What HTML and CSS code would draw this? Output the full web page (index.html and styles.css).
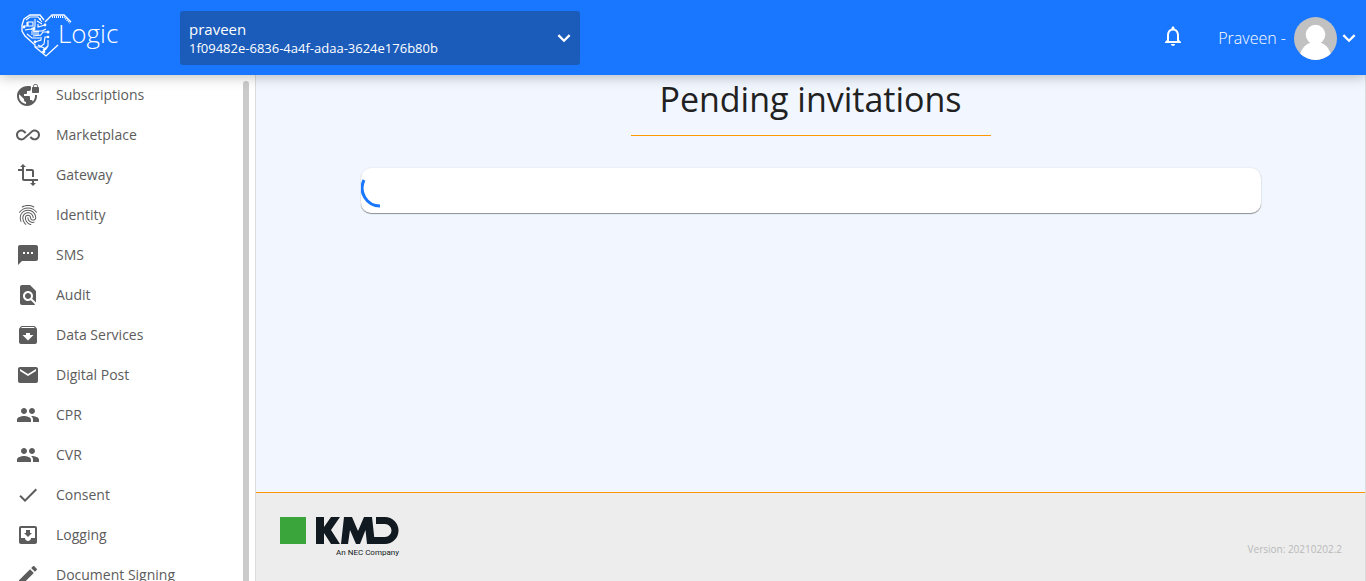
FILE: index.html
```html
<!DOCTYPE html>
<html lang="en">
<head>
<meta charset="utf-8">
<meta name="viewport" content="width=device-width, initial-scale=1">
<title>Logic - Pending invitations</title>
<link rel="stylesheet" href="styles.css">
</head>
<body>
<div class="app">
  <header class="topbar">
    <a class="brand" href="#" aria-label="Logic home">
      <svg class="brand-heart" viewBox="0 0 52 46" fill="none" stroke="currentColor" aria-hidden="true">
        <path stroke-width="1.3" d="M24 8l-4-5H10L4 7l-2 6v6l3 5 10 9v2l11 9 12-11M25 10l7-7h12l7 7"/>
        <path stroke-width="1.8" stroke-dasharray="1 1" d="M32 5h12l6 6"/>
        <path stroke-width="1.1" d="M6 8l4-3h8l4 5M4 14h3v-4M8 10h5v4H8zM10 5h6M15 7v8l-4 2M17 9l5 3M18 12v3l7-2M5 18l6-1 3 2h8l4-2M11 20h8M11 22h8M7 22l5 4h8M13 24l8-1M28 20h-5l-3 4M28 25h-3l-1 7-4 3h-5M15 30l6-2v-3M28 28v6l-5 4M18 33l6 3v5M22 40l4-3 2-3"/>
        <g fill="currentColor" stroke="none"><circle cx="28" cy="20" r="1.500"/><circle cx="28" cy="25" r="1.300"/><circle cx="25" cy="13" r="1.400"/><circle cx="4" cy="15" r="1.400"/><circle cx="14" cy="17" r="1.400"/><circle cx="15" cy="30" r="1.400"/><circle cx="24" cy="40" r="1.300"/><circle cx="20" cy="7" r="1.100"/></g>
      </svg>
      <span class="brand-name">Logic</span>
    </a>
    <button class="tenant" type="button" aria-haspopup="listbox">
      <span class="tenant-text">
        <span class="tenant-name">praveen</span>
        <span class="tenant-id">1f09482e-6836-4a4f-adaa-3624e176b80b</span>
      </span>
      <svg class="chevron" viewBox="0 0 12 8" aria-hidden="true"><path d="M1 1l5 5 5-5"/></svg>
    </button>
    <div class="account">
      <button class="bell" type="button" aria-label="Notifications">
        <svg class="icon" viewBox="0 0 24 24" aria-hidden="true"><path d="M12 22c1.1 0 2-.9 2-2h-4c0 1.1.9 2 2 2zm6-6v-5c0-3.07-1.63-5.64-4.5-6.32V4c0-.83-.67-1.5-1.5-1.5s-1.5.67-1.5 1.5v.68C7.64 5.36 6 7.92 6 11v5l-2 2v1h16v-1l-2-2zm-2 1H8v-6c0-2.48 1.51-4.5 4-4.5s4 2.02 4 4.5v6z"/></svg>
      </button>
      <button class="profile" type="button">
        <span class="profile-name">Praveen -</span>
        <svg class="avatar" viewBox="0 0 44 44" aria-hidden="true">
          <defs><clipPath id="round"><circle cx="22" cy="22" r="22"/></clipPath></defs>
          <g clip-path="url(#round)"><path fill="#c1c1c1" d="M0 0h44v44H0z"/><g fill="#fff"><circle cx="22" cy="18" r="10"/><path d="M5 44c1-10 6-16 12-18h10c6 2 11 8 12 18z"/></g></g>
        </svg>
        <svg class="chevron" viewBox="0 0 12 8" aria-hidden="true"><path d="M1 1l5 5 5-5"/></svg>
      </button>
    </div>
  </header>
  <div class="body">
    <nav class="sidebar" aria-label="Services">
      <ul class="menu">
        <li><a class="menu-link" href="#"><svg class="icon" viewBox="0 0 24 24"><path d="M22 4v-.5C22 2.12 20.88 1 19.5 1S17 2.12 17 3.5V4c-.55 0-1 .45-1 1v4c0 .55.45 1 1 1h5c.55 0 1-.45 1-1V5c0-.55-.45-1-1-1zm-.8 0h-3.4v-.5c0-.94.76-1.7 1.7-1.7s1.7.76 1.7 1.7V4zm-2.28 8c.04.33.08.66.08 1 0 2.08-.8 3.97-2.1 5.39-.26-.81-1-1.39-1.9-1.39h-1v-3c0-.55-.45-1-1-1H8v-2h2c.55 0 1-.45 1-1V8h2c1.1 0 2-.9 2-2V3.46c-.95-.3-1.95-.46-3-.46C5.48 3 1 7.48 1 13s4.48 10 10 10 10-4.48 10-10c0-.34-.02-.67-.05-1h-2.03zM10 20.93c-3.95-.49-7-3.85-7-7.93 0-.62.08-1.21.21-1.79L8 16v1c0 1.1.9 2 2 2v1.93z"/></svg>Subscriptions</a></li>
        <li><a class="menu-link" href="#"><svg class="icon" viewBox="0 0 24 24"><path d="M18.6 6.62c-1.44 0-2.8.56-3.77 1.53L12 10.66 10.48 12h.01L7.8 14.39c-.64.64-1.49.99-2.4.99-1.87 0-3.39-1.51-3.39-3.38S3.53 8.62 5.4 8.62c.91 0 1.76.35 2.44 1.03l1.13 1 1.51-1.34L9.22 8.2C8.2 7.18 6.84 6.62 5.4 6.62 2.42 6.62 0 9.04 0 12s2.42 5.38 5.4 5.38c1.44 0 2.8-.56 3.77-1.53l2.83-2.5.01.01L13.52 12h-.01l2.69-2.39c.64-.64 1.49-.99 2.4-.99 1.87 0 3.39 1.51 3.39 3.38s-1.52 3.38-3.39 3.38c-.9 0-1.76-.35-2.44-1.03l-1.14-1.01-1.51 1.34 1.27 1.12c1.02 1.01 2.37 1.57 3.82 1.57 2.98 0 5.4-2.41 5.4-5.38s-2.42-5.37-5.4-5.37z"/></svg>Marketplace</a></li>
        <li><a class="menu-link" href="#"><svg class="icon" viewBox="0 0 24 24"><path d="M22 18v-2H8V4h2L7 1 4 4h2v2H2v2h4v8c0 1.1.9 2 2 2h8v2h-2l3 3 3-3h-2v-2h4zM10 8h6v6h2V8c0-1.1-.9-2-2-2h-6v2z"/></svg>Gateway</a></li>
        <li><a class="menu-link" href="#"><svg class="icon" viewBox="0 0 24 24"><path d="M17.81 4.47c-.08 0-.16-.02-.23-.06C15.66 3.42 14 3 12.01 3c-1.98 0-3.86.47-5.57 1.41-.24.13-.54.04-.68-.2-.13-.24-.04-.55.2-.68C7.82 2.52 9.86 2 12.01 2c2.13 0 3.99.47 6.03 1.52.25.13.34.43.21.67-.09.18-.26.28-.44.28zM3.5 9.72c-.1 0-.2-.03-.29-.09-.23-.16-.28-.47-.12-.7.99-1.4 2.25-2.5 3.75-3.27C9.98 4.04 14 4.03 17.15 5.65c1.5.77 2.76 1.86 3.75 3.25.16.22.11.54-.12.7-.23.16-.54.11-.7-.12-.9-1.26-2.04-2.25-3.39-2.94-2.87-1.47-6.54-1.47-9.4.01-1.36.7-2.5 1.7-3.4 2.96-.08.14-.23.21-.39.21zm6.25 12.07c-.13 0-.26-.05-.35-.15-.87-.87-1.34-1.43-2.01-2.64-.69-1.23-1.05-2.73-1.05-4.34 0-2.97 2.54-5.39 5.66-5.39s5.66 2.42 5.66 5.39c0 .28-.22.5-.5.5s-.5-.22-.5-.5c0-2.42-2.09-4.39-4.66-4.39-2.57 0-4.66 1.97-4.66 4.39 0 1.44.32 2.77.93 3.85.64 1.15 1.08 1.64 1.85 2.42.19.2.19.51 0 .71-.11.1-.24.15-.37.15zm7.17-1.85c-1.19 0-2.24-.3-3.1-.89-1.49-1.01-2.38-2.65-2.38-4.39 0-.28.22-.5.5-.5s.5.22.5.5c0 1.41.72 2.74 1.94 3.56.71.48 1.54.71 2.54.71.24 0 .64-.03 1.04-.1.27-.05.53.13.58.41.05.27-.13.53-.41.58-.57.11-1.07.12-1.21.12zM14.91 22c-.04 0-.09-.01-.13-.02-1.59-.44-2.63-1.03-3.72-2.1-1.4-1.39-2.17-3.24-2.17-5.22 0-1.62 1.38-2.94 3.08-2.94 1.7 0 3.08 1.32 3.08 2.94 0 1.07.93 1.94 2.08 1.94s2.08-.87 2.08-1.94c0-3.77-3.25-6.83-7.25-6.83-2.84 0-5.44 1.58-6.61 4.03-.39.81-.59 1.76-.59 2.8 0 .78.07 2.01.67 3.61.1.26-.03.55-.29.64-.26.1-.55-.04-.64-.29-.49-1.31-.73-2.61-.73-3.96 0-1.2.23-2.29.68-3.24 1.33-2.79 4.28-4.6 7.51-4.6 4.55 0 8.25 3.51 8.25 7.83 0 1.62-1.38 2.94-3.08 2.94s-3.08-1.32-3.08-2.94c0-1.07-.93-1.94-2.08-1.94s-2.08.87-2.08 1.94c0 1.71.66 3.31 1.87 4.51.95.94 1.86 1.46 3.27 1.85.27.07.42.35.35.61-.05.23-.26.38-.47.38z"/></svg>Identity</a></li>
        <li><a class="menu-link" href="#"><svg class="icon" viewBox="0 0 24 24"><path d="M20 2H4c-1.100 0-1.990.9-1.990 2L2 22l4-4h14c1.100 0 2-.9 2-2V4c0-1.100-.9-2-2-2zM9 11H7V9h2v2zm4 0h-2V9h2v2zm4 0h-2V9h2v2z"/></svg>SMS</a></li>
        <li><a class="menu-link" href="#"><svg class="icon" viewBox="0 0 24 24"><path d="M20 19.590V8l-6-6H6c-1.100 0-1.990.9-1.990 2L4 20c0 1.100.89 2 1.990 2H18c.45 0 .85-.15 1.190-.4l-4.430-4.430c-.8.52-1.740.83-2.760.83-2.760 0-5-2.240-5-5s2.240-5 5-5 5 2.240 5 5c0 1.020-.31 1.960-.83 2.750L20 19.590zM9 13c0 1.660 1.340 3 3 3s3-1.340 3-3-1.340-3-3-3-3 1.340-3 3z"/></svg>Audit</a></li>
        <li><a class="menu-link" href="#"><svg class="icon" viewBox="0 0 24 24"><path d="M20.540 5.230l-1.390-1.680C18.880 3.210 18.470 3 18 3H6c-.47 0-.88.21-1.160.55L3.460 5.230C3.170 5.570 3 6.020 3 6.500V19c0 1.100.9 2 2 2h14c1.100 0 2-.9 2-2V6.500c0-.48-.17-.93-.46-1.270zM12 17.500L6.500 12H10v-2h4v2h3.500L12 17.500zM5.120 5l.81-1h12l.94 1H5.120z"/></svg>Data Services</a></li>
        <li><a class="menu-link" href="#"><svg class="icon" viewBox="0 0 24 24"><path d="M20 4H4c-1.100 0-1.990.9-1.990 2L2 18c0 1.100.9 2 2 2h16c1.100 0 2-.9 2-2V6c0-1.100-.9-2-2-2zm0 4l-8 5-8-5V6l8 5 8-5v2z"/></svg>Digital Post</a></li>
        <li><a class="menu-link" href="#"><svg class="icon" viewBox="0 0 24 24"><path d="M16 11c1.660 0 2.990-1.340 2.990-3S17.660 5 16 5s-3 1.340-3 3 1.340 3 3 3zm-8 0c1.660 0 2.990-1.340 2.990-3S9.660 5 8 5 5 6.340 5 8s1.340 3 3 3zm0 2c-2.330 0-7 1.170-7 3.500V19h14v-2.500c0-2.330-4.670-3.500-7-3.500zm8 0c-.29 0-.62.02-.97.05 1.160.84 1.970 1.970 1.970 3.450V19h6v-2.500c0-2.330-4.670-3.500-7-3.500z"/></svg>CPR</a></li>
        <li><a class="menu-link" href="#"><svg class="icon" viewBox="0 0 24 24"><path d="M16 11c1.660 0 2.990-1.340 2.990-3S17.660 5 16 5s-3 1.340-3 3 1.340 3 3 3zm-8 0c1.660 0 2.990-1.340 2.990-3S9.660 5 8 5 5 6.340 5 8s1.340 3 3 3zm0 2c-2.330 0-7 1.170-7 3.500V19h14v-2.500c0-2.330-4.670-3.500-7-3.500zm8 0c-.29 0-.62.02-.97.05 1.160.84 1.970 1.970 1.970 3.450V19h6v-2.500c0-2.330-4.670-3.500-7-3.500z"/></svg>CVR</a></li>
        <li><a class="menu-link" href="#"><svg class="icon" viewBox="0 0 24 24"><path d="M9 16.170L4.830 12l-1.420 1.410L9 19 21 7l-1.410-1.410z"/></svg>Consent</a></li>
        <li><a class="menu-link" href="#"><svg class="icon" viewBox="0 0 24 24"><path d="M19 3H4.990c-1.110 0-1.980.9-1.980 2L3 19c0 1.100.88 2 1.990 2H19c1.100 0 2-.9 2-2V5c0-1.100-.9-2-2-2zm0 12h-4c0 1.660-1.350 3-3 3s-3-1.340-3-3H4.990V5H19v10zm-3-5h-2V7h-4v3H8l4 4 4-4z"/></svg>Logging</a></li>
        <li><a class="menu-link" href="#"><svg class="icon" viewBox="0 0 24 24"><path d="M3 17.250V21h3.750L17.810 9.940l-3.750-3.750L3 17.250zM20.710 7.040c.39-.39.39-1.020 0-1.410l-2.340-2.340c-.39-.39-1.020-.39-1.410 0l-1.830 1.830 3.750 3.750 1.830-1.830z"/></svg>Document Signing</a></li>
      </ul>
      <div class="scroll-thumb"></div>
    </nav>
    <div class="page">
      <main class="content">
        <h1 class="title">Pending invitations</h1>
        <section class="card" aria-busy="true" aria-label="Loading invitations">
          <svg class="spinner" viewBox="0 0 40 40" aria-hidden="true"><path d="M3 12A18 18 0 0 0 19 38"/></svg>
        </section>
      </main>
      <footer class="footer">
        <div class="company">
          <svg class="company-logo" viewBox="0 0 119 27" role="img" aria-label="KMD">
            <path fill="#3aa53a" d="M0 0h26v27H0z"/>
            <g fill="#111a20"><path d="M36 0h8v10L51 0h9l-9 13 9 14h-9l-7-11v11h-8z"/><path d="M64 0h8l6 14 6-14h8l3 27h-8l-1.500-14L80 27h-4l-6-14-2 14h-7z"/><path d="M96 0h9a13.500 13.500 0 0 1 0 27H93v-7h12a6.500 6.500 0 0 0 0-13h-9z"/></g>
          </svg>
          <span class="company-tag">An NEC Company</span>
        </div>
        <span class="version">Version: 20210202.2</span>
      </footer>
    </div>
  </div>
</div>
</body>
</html>
```
FILE: styles.css
```css
* { box-sizing: border-box; }

body {
  margin: 0;
  font-family: "Open Sans", sans-serif;
  font-size: 14px;
  color: #212121;
}

button {
  border: 0;
  padding: 0;
  background: none;
  color: inherit;
  font: inherit;
  cursor: pointer;
}

a { color: inherit; text-decoration: none; }

.icon { width: 24px; height: 24px; flex: none; fill: currentColor; }

.app { display: flex; flex-direction: column; height: 100vh; }

.topbar {
  position: relative;
  z-index: 1;
  display: flex;
  align-items: center;
  flex: none;
  padding: 11px 10px 10px;
  background: #1976ff;
  color: #fff;
  box-shadow: 0 2px 12px rgba(0, 0, 0, 0.25);
}

.brand { display: flex; align-items: center; width: 160px; padding: 0 0 7px 10px; margin-right: 10px; }
.brand-heart { width: 52px; height: 46px; flex: none; }
.brand-name { margin-left: -14px; font-size: 26px; font-weight: 300; line-height: 36px; padding-bottom: 4px; }

.tenant {
  display: flex;
  align-items: center;
  justify-content: space-between;
  width: 400px;
  padding: 8px 9px;
  border-radius: 3px;
  background: #1b5cbb;
  text-align: left;
}
.tenant-text { display: flex; flex-direction: column; }
.tenant-name { font-size: 15px; line-height: 20px; font-weight: 500; }
.tenant-id { font-size: 13px; line-height: 18px; }

.chevron { width: 14px; height: 9px; flex: none; fill: none; stroke: currentColor; stroke-width: 2; }

.account { display: flex; align-items: center; gap: 33px; margin-left: auto; }
.bell { display: flex; padding-bottom: 4px; }
.profile { display: flex; align-items: center; gap: 5px; font-size: 16px; font-weight: 300; }
.profile-name { margin-right: 3px; }
.avatar { width: 43px; height: 43px; }

.body { display: flex; flex: 1; min-height: 0; }

.sidebar {
  display: flex;
  justify-content: space-between;
  flex: none;
  width: 256px;
  padding-right: 6px;
  border-right: 1px solid #dcdcdc;
  background: #fff;
  overflow: hidden;
}
.menu { margin: 0; padding: 0; list-style: none; }
.menu-link {
  display: flex;
  align-items: center;
  gap: 16px;
  height: 40px;
  padding-left: 16px;
  color: #5c5c5c;
  font-weight: 500;
  line-height: 18px;
}
.scroll-thumb { width: 6px; margin-top: 6px; border-radius: 3px 3px 0 0; background: #cbcbcb; }

.page { display: flex; flex-direction: column; flex: 1; min-width: 0; border-right: 1px solid #dcdcdc; }

.content { flex: 1; padding: 0 24px; background: #f1f6ff; }
.title {
  max-width: 360px;
  margin: 0 auto 32px;
  padding-bottom: 12px;
  border-bottom: 1px solid #ff9800;
  font-size: 34px;
  font-weight: 400;
  line-height: 48px;
  text-align: center;
  white-space: nowrap;
}
.card {
  max-width: 900px;
  margin: 0 auto;
  padding-bottom: 5px;
  border-radius: 10px;
  background: #fff;
  box-shadow: 0 1px 1px rgba(0, 0, 0, 0.4), 0 0 2px rgba(0, 0, 0, 0.1);
}
.spinner { display: block; width: 40px; height: 40px; fill: none; stroke: #1976ff; stroke-width: 3; }

.footer {
  display: flex;
  justify-content: space-between;
  align-items: flex-end;
  flex: none;
  padding: 24px 23px 22px 24px;
  border-top: 1px solid #ff9800;
  background: #ededed;
}
.company { display: flex; flex-direction: column; gap: 3px; }
.company-logo { width: 119px; height: 27px; }
.company-tag {
  color: #111a20;
  font-family: Roboto, sans-serif;
  font-size: 8px;
  line-height: 12px;
  text-align: right;
}
.version { color: #b9b9b9; font-size: 10px; line-height: 20px; }
```
